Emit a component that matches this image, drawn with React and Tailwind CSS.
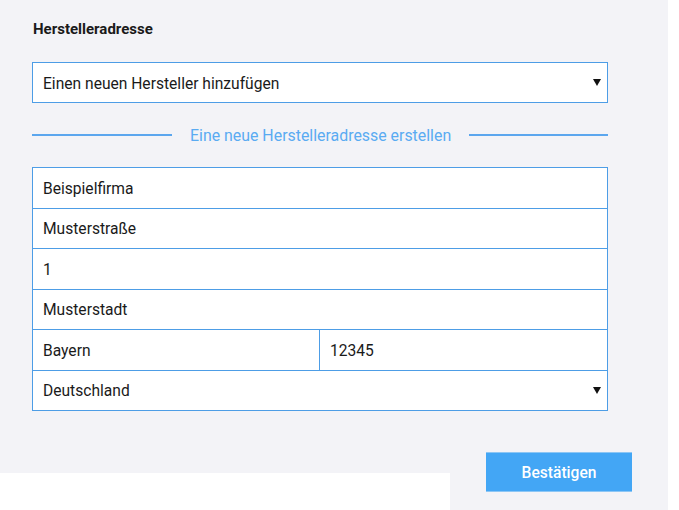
import React from 'react';

const Arrow = () => (
  <svg width="8" height="7" viewBox="0 0 8 7" className="shrink-0">
    <polygon points="0,0 8,0 4,7" fill="#111" />
  </svg>
);

const Row = ({ children, className = '' }) => (
  <div className={`h-[40.5px] flex items-center border-b border-[#4d9de6] ${className}`}>{children}</div>
);

export default function App() {
  const fields = ['Beispielfirma', 'Musterstraße', '1', 'Musterstadt'];

  return (
    <div className="relative w-[679px] h-[510px] bg-white overflow-hidden" style={{ fontFamily: 'Roboto, "Liberation Sans", sans-serif' }}>
      <div className="w-[668px] h-full bg-[#f3f3f7] flex flex-col px-[32px] pt-[19px]">
        <h2 className="text-[15px] leading-[20px] font-bold text-[#1a1a1a] pl-[1px]">Herstelleradresse</h2>

        {/* Hersteller select */}
        <div className="mt-[23px] w-[576px] h-[41px] bg-white border border-[#4d9de6] flex items-center justify-between pl-[10px] pr-[6px] text-[15.6px] text-[#1a1a1a]">
          <span className="pt-[4px]">Einen neuen Hersteller hinzufügen</span>
          <Arrow />
        </div>

        {/* Divider */}
        <div className="mt-[22px] w-[576px] h-[20px] flex items-center">
          <div className="w-[140px] h-[2px] bg-[#5ba6ee]" />
          <span className="ml-[18px] pt-[2px] text-[15.9px] text-[#5aabf2] whitespace-nowrap">Eine neue Herstelleradresse erstellen</span>
          <div className="ml-[18px] flex-1 h-[2px] bg-[#5ba6ee]" />
        </div>

        {/* Address fields */}
        <div className="mt-[22px] w-[576px] bg-white border-x border-t border-[#4d9de6] text-[15.6px] text-[#1a1a1a]">
          {fields.map((f) => (
            <Row key={f} className="pl-[10px]"><span className="pt-[3px]">{f}</span></Row>
          ))}
          <Row>
            <div className="w-[287px] h-full flex items-center pl-[10px] pt-[3px] border-r border-[#4d9de6]">Bayern</div>
            <div className="flex-1 h-full flex items-center pl-[10px] pt-[3px]">12345</div>
          </Row>
          <Row className="pl-[10px] pr-[6px] justify-between">
            <span className="pt-[3px]">Deutschland</span>
            <Arrow />
          </Row>
        </div>

        <div className="mt-[41px] flex justify-end pr-[4px]">
          <button className="w-[146px] h-[40px] pt-[3px] bg-[#43a6f5] border-y border-[#8cc6f5] text-white text-[15.6px] font-medium">
            Bestätigen
          </button>
        </div>
      </div>

      {/* white area bottom-left */}
      <div className="absolute left-0 top-[473px] w-[450px] h-[37px] bg-white" />
    </div>
  );
}
